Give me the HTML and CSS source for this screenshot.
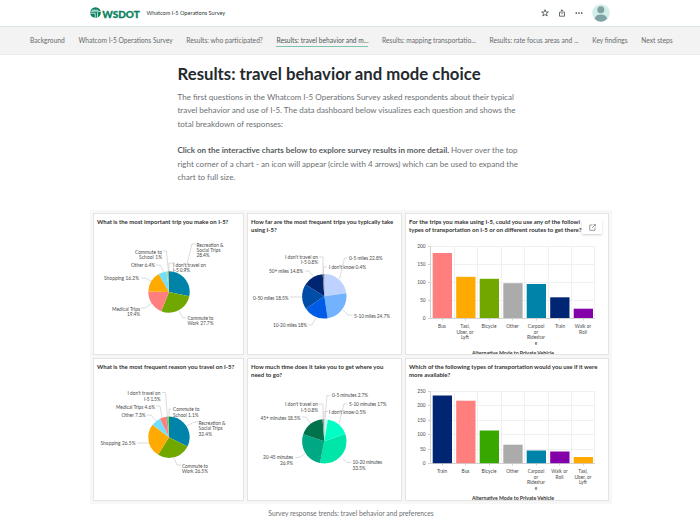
FILE: index.html
```
<!DOCTYPE html>
<html lang="en">
<head>
<meta charset="utf-8">
<title>Whatcom I-5 Operations Survey</title>
<link rel="stylesheet" href="styles.css">
</head>
<body>
<header class="topbar">
  <svg class="logo" width="50" height="14" viewBox="0 -1 50 14">
    <ellipse cx="5.5" cy="5.5" rx="5.4" ry="5.3" fill="#0b8261"/>
    <path d="M0 4.2h7.2c1.3 0 1.3-1 0-1H2M0 6.2h5.2v4.6M10.9 4.5H9.2c-1.2 0-1.7.7-1.7 1.7v4.4" fill="none" stroke="#fff" stroke-width=".75"/>
    <text x="12.2" y="10.9" textLength="37.5" lengthAdjust="spacingAndGlyphs">WSDOT</text>
  </svg>
  <span class="site-title">Whatcom I-5 Operations Survey</span>
  <div class="actions">
    <svg width="8" height="8" viewBox="0 0 8 8"><path d="M4 .7 4.9 3h2.500l-2 1.500.8 2.500L4 5.500 1.800 7l.8-2.500-2-1.500h2.500z"/></svg>
    <svg width="8" height="8" viewBox="0 0 8 8"><path d="M2.800 3.200H1.500v4h5v-4H5.200M4 5.400V.8M2.600 2.200 4 .8l1.400 1.400"/></svg>
    <svg width="8" height="8" viewBox="0 0 8 8"><g class="dots"><circle cx="1.300" cy="4" r=".85"/><circle cx="4" cy="4" r=".85"/><circle cx="6.700" cy="4" r=".85"/></g></svg>
  </div>
  <svg class="avatar" width="18" height="18" viewBox="0 0 18 18"><circle cx="9" cy="9" r="8.800" fill="#d3edeb"/><circle cx="8.800" cy="5.800" r="3.500" fill="#7fa3a3"/><path d="M2.600 14.800c.5-2.900 3-4.400 6.300-4.400s5.800 1.500 6.300 4.400A8.600 8.600 0 0 1 9 17.700a8.600 8.600 0 0 1-6.400-2.900z" fill="#7fa3a3"/></svg>
</header>
<nav class="nav">
  <a>Background</a>
  <a>Whatcom I-5 Operations Survey</a>
  <a>Results: who participated?</a>
  <a class="active">Results: travel behavior and m...</a>
  <a>Results: mapping transportatio...</a>
  <a>Results: rate focus areas and ...</a>
  <a>Key findings</a>
  <a>Next steps</a>
</nav>
<main>
  <section class="intro">
    <h1>Results: travel behavior and mode choice</h1>
    <p class="para">The first questions in the Whatcom I-5 Operations Survey asked respondents about their typical<br>travel behavior and use of I-5. The data dashboard below visualizes each question and shows the<br>total breakdown of responses:</p>
    <p class="para"><b>Click on the interactive charts below to explore survey results in more detail.</b> Hover over the top<br>right corner of a chart - an icon will appear (circle with 4 arrows) which can be used to expand the<br>chart to full size.</p>
  </section>
  <figure class="figure">
    <div class="dashboard">
      <article class="card">
        <h2>What is the most important trip you make on I-5?</h2>
        <svg width="149" height="118" viewBox="94 236 149 118">
          <g class="leader"><path d="M196 244h-4l-7 28M163 251h3.500l2 22M156 265h4l4 7M174 263h-5v10M141 278h4l8 4M141 308h4l7-5M186 318h-3l-4-7"/></g>
          <g class="pie" transform="translate(169 292) rotate(-90)">
            <circle r="10.350" stroke="#0083a8" pathLength="100" stroke-dasharray="28.4 100"/>
            <circle r="10.350" stroke="#70a800" pathLength="100" stroke-dasharray="27.7 100" stroke-dashoffset="-28.4"/>
            <circle r="10.350" stroke="#ff7f7f" pathLength="100" stroke-dasharray="19.4 100" stroke-dashoffset="-56.1"/>
            <circle r="10.350" stroke="#ffaa00" pathLength="100" stroke-dasharray="16.2 100" stroke-dashoffset="-75.5"/>
            <circle r="10.350" stroke="#73dfff" pathLength="100" stroke-dasharray="6.4 100" stroke-dashoffset="-91.7"/>
            <circle r="10.350" stroke="#a3e57a" pathLength="100" stroke-dasharray="1 100" stroke-dashoffset="-98.1"/>
            <circle r="10.350" stroke="#9c9c9c" pathLength="100" stroke-dasharray=".9 100" stroke-dashoffset="-99.1"/>
          </g>
          <g class="label">
            <text x="196.500" y="246.500" textLength="27">Recreation &amp;</text><text x="196.500" y="251.800" textLength="24">Social Trips</text><text x="196.500" y="257.100" textLength="13">28.4%</text>
            <text x="135" y="253.700" textLength="27">Commute to</text><text x="139" y="258.900" textLength="23">School 1%</text>
            <text x="131" y="267" textLength="24">Other 6.4%</text>
            <text x="173" y="266.500" textLength="33">I don't travel on</text><text x="173" y="271.700" textLength="17">I-5 0.9%</text>
            <text x="104" y="280" textLength="35">Shopping 16.2%</text>
            <text x="112" y="310.500" textLength="28">Medical Trips</text><text x="127" y="316" textLength="13">19.4%</text>
            <text x="187.500" y="320" textLength="26">Commute to</text><text x="187.500" y="325.300" textLength="26">Work 27.7%</text>
          </g>
        </svg>
      </article>
      <article class="card">
        <h2>How far are the most frequent trips you typically take<br>using I-5?</h2>
        <svg width="153" height="118" viewBox="248 236 153 118">
          <g class="leader"><path d="M347 258h-2.500l-5 21M319 257h4v17M327 267h-3.500v7M305 271h4l4 5M290 297h12M308 325h4l4-7M353 315h-5l-5-5"/></g>
          <g class="pie big" transform="translate(324.300 296.300) rotate(-90)">
            <circle r="11.100" stroke="#bed2ff" pathLength="100" stroke-dasharray="22.8 100"/>
            <circle r="11.100" stroke="#73b2ff" pathLength="100" stroke-dasharray="24.7 100" stroke-dashoffset="-22.8"/>
            <circle r="11.100" stroke="#005ce6" pathLength="100" stroke-dasharray="18 100" stroke-dashoffset="-47.5"/>
            <circle r="11.100" stroke="#004da8" pathLength="100" stroke-dasharray="18.5 100" stroke-dashoffset="-65.5"/>
            <circle r="11.100" stroke="#002673" pathLength="100" stroke-dasharray="14.8 100" stroke-dashoffset="-84"/>
            <circle r="11.100" stroke="#828282" pathLength="100" stroke-dasharray="1.2 100" stroke-dashoffset="-98.8"/>
          </g>
          <g class="label">
            <text x="285" y="258.700" textLength="33">I don't travel on</text><text x="301" y="264" textLength="17">I-5 0.8%</text>
            <text x="349" y="260" textLength="33.500">0-5 miles 22.8%</text>
            <text x="329" y="269" textLength="37">I don't know 0.4%</text>
            <text x="269" y="272.800" textLength="34">50+ miles 14.8%</text>
            <text x="253" y="299.500" textLength="35.500">0-50 miles 18.5%</text>
            <text x="273" y="327" textLength="34">10-20 miles 18%</text>
            <text x="354" y="317.500" textLength="36">5-10 miles 24.7%</text>
          </g>
        </svg>
      </article>
      <article class="card">
        <h2>For the trips you make using I-5, could you use any of the followi<br>types of transportation on I-5 or on different routes to get there?</h2>
        <svg width="202" height="118" viewBox="406 236 202 118">
          <path class="grid" d="M430.500 246.500H595M430.500 264.500H595M430.500 282.500H595M430.500 300.500H595M454.500 246v72M477.500 246v72M501.500 246v72M524.500 246v72M548.500 246v72M571.500 246v72M594.500 246v72"/>
          <path class="axis" d="M430.500 246v72.500H595M428 246.500h2M428 264.500h2M428 282.500h2M428 300.500h2M428 318.500h2M442.500 318v2.500M465.500 318v2.500M489.500 318v2.500M512.500 318v2.500M536.500 318v2.500M559.500 318v2.500M583.500 318v2.500"/>
          <rect x="432.700" y="253" width="19.300" height="65" fill="#ff7f7f"/>
          <rect x="456.200" y="276.800" width="19.300" height="41.200" fill="#ffaa00"/>
          <rect x="479.700" y="278.800" width="19.300" height="39.200" fill="#70a800"/>
          <rect x="503.300" y="283.200" width="19.300" height="34.800" fill="#ababab"/>
          <rect x="526.700" y="284" width="19.300" height="34" fill="#0083a8"/>
          <rect x="550.200" y="297.300" width="19.300" height="20.700" fill="#002673"/>
          <rect x="573.700" y="308.700" width="19.300" height="9.300" fill="#8400a8"/>
          <g class="label end"><text x="425.500" y="247.700">200</text><text x="425.500" y="265.700">150</text><text x="425.500" y="283.700">100</text><text x="425.500" y="301.900">50</text><text x="425.500" y="319.900">0</text></g>
          <g class="label mid"><text x="442" y="328">Bus</text><text x="465" y="328">Taxi,</text><text x="465" y="333.500">Uber, or</text><text x="465" y="339">Lyft</text><text x="489" y="328">Bicycle</text><text x="512.500" y="328">Other</text><text x="536" y="328">Carpool</text><text x="536" y="333.500">or</text><text x="536" y="339">Rideshar</text><text x="536" y="344.500">e</text><text x="560" y="328">Train</text><text x="583" y="328">Walk or</text><text x="583" y="333.500">Roll</text></g>
          <text class="axis-title" x="472" y="354.500" textLength="82" lengthAdjust="spacingAndGlyphs">Alternative Mode to Private Vehicle</text>
        </svg>
        <span class="expand"><svg width="7" height="7" viewBox="0 0 7 7"><path d="M3.500 1H.7v5.300H6V3.500M3 4l3.300-3.300M4.400.6h2v2"/></svg></span>
      </article>
      <article class="card">
        <h2>What is the most frequent reason you travel on I-5?</h2>
        <svg width="149" height="119" viewBox="94 381 149 119">
          <g class="leader"><path d="M162 392.500h3.500l2 26M156 406h4l2 11M147 415h4l5 6M171 409h-2v8M198 422h-4l-7 4M137 443h12M181 465h-4l-3-7"/></g>
          <g class="pie" transform="translate(169 437.300) rotate(-90)">
            <circle r="10.350" stroke="#0083a8" pathLength="100" stroke-dasharray="32.4 100"/>
            <circle r="10.350" stroke="#70a800" pathLength="100" stroke-dasharray="26.5 100" stroke-dashoffset="-32.4"/>
            <circle r="10.350" stroke="#ffaa00" pathLength="100" stroke-dasharray="26.5 100" stroke-dashoffset="-58.9"/>
            <circle r="10.350" stroke="#73dfff" pathLength="100" stroke-dasharray="7.4 100" stroke-dashoffset="-85.4"/>
            <circle r="10.350" stroke="#ff7f7f" pathLength="100" stroke-dasharray="4.6 100" stroke-dashoffset="-92.8"/>
            <circle r="10.350" stroke="#9c9c9c" pathLength="100" stroke-dasharray="1.5 100" stroke-dashoffset="-97.4"/>
            <circle r="10.350" stroke="#7edc1c" pathLength="100" stroke-dasharray="1.1 100" stroke-dashoffset="-98.9"/>
          </g>
          <g class="label">
            <text x="127.500" y="395" textLength="33">I don't travel on</text><text x="144" y="400.500" textLength="16.500">I-5 1.5%</text>
            <text x="116" y="409" textLength="39">Medical Trips 4.6%</text>
            <text x="121.500" y="417.300" textLength="24">Other 7.3%</text>
            <text x="173" y="411.300" textLength="26.500">Commute to</text><text x="173" y="416.600" textLength="25.500">School 1.1%</text>
            <text x="198.500" y="424.500" textLength="27">Recreation &amp;</text><text x="198.500" y="430" textLength="24">Social Trips</text><text x="198.500" y="435.500" textLength="13.500">32.4%</text>
            <text x="100.500" y="445.200" textLength="35">Shopping 26.5%</text>
            <text x="182" y="467.500" textLength="26">Commute to</text><text x="182" y="473" textLength="26">Work 26.5%</text>
          </g>
        </svg>
      </article>
      <article class="card">
        <h2>How much time does it take you to get where you<br>need to go?</h2>
        <svg width="153" height="119" viewBox="248 381 153 119">
          <g class="leader"><path d="M330 395.500h-3l-2 24M319 404h4v15M328 411.500h-4v8M347 404h-3l-5 19M302 417h4l5 7M295 457.500h4l6-4M351 462.500h-4l-4-4"/></g>
          <g class="pie big" transform="translate(324.300 441.300) rotate(-90)">
            <circle r="11.100" stroke="#beffe8" pathLength="100" stroke-dasharray="2.7 100"/>
            <circle r="11.100" stroke="#00ffc5" pathLength="100" stroke-dasharray="17 100" stroke-dashoffset="-2.7"/>
            <circle r="11.100" stroke="#00e6a9" pathLength="100" stroke-dasharray="33.5 100" stroke-dashoffset="-19.7"/>
            <circle r="11.100" stroke="#00a884" pathLength="100" stroke-dasharray="26.9 100" stroke-dashoffset="-53.2"/>
            <circle r="11.100" stroke="#00734c" pathLength="100" stroke-dasharray="18.6 100" stroke-dashoffset="-80.1"/>
            <circle r="11.100" stroke="#9c9c9c" pathLength="100" stroke-dasharray="1.3 100" stroke-dashoffset="-98.7"/>
          </g>
          <g class="label">
            <text x="332" y="397.300" textLength="36">0-5 minutes 2.7%</text>
            <text x="285" y="406.300" textLength="33">I don't travel on</text><text x="301" y="411.800" textLength="17">I-5 0.8%</text>
            <text x="349" y="405.600" textLength="37.500">5-10 minutes 17%</text>
            <text x="329" y="413.800" textLength="37">I don't know 0.5%</text>
            <text x="260.500" y="420.300" textLength="40">45+ minutes 18.5%</text>
            <text x="263" y="459" textLength="30">20-45 minutes</text><text x="280" y="464.600" textLength="13">26.9%</text>
            <text x="352.500" y="464" textLength="29.500">10-20 minutes</text><text x="352.500" y="469.500" textLength="13">33.5%</text>
          </g>
        </svg>
      </article>
      <article class="card">
        <h2>Which of the following types of transportation would you use if it were<br>more available?</h2>
        <svg width="202" height="119" viewBox="406 381 202 119">
          <path class="grid" d="M430.500 391.500H595M430.500 405.500H595M430.500 420.500H595M430.500 434.500H595M430.500 449.500H595M454.500 391v72M477.500 391v72M501.500 391v72M524.500 391v72M548.500 391v72M571.500 391v72M594.500 391v72"/>
          <path class="axis" d="M430.500 391v72.500H595M428 391.500h2M428 405.500h2M428 420.500h2M428 434.500h2M428 449.500h2M428 463.500h2M442.500 463v2.500M465.500 463v2.500M489.500 463v2.500M512.500 463v2.500M536.500 463v2.500M559.500 463v2.500M583.500 463v2.500"/>
          <rect x="432.700" y="395.500" width="19.300" height="67.700" fill="#002673"/>
          <rect x="456.200" y="400.700" width="19.300" height="62.500" fill="#ff7f7f"/>
          <rect x="479.700" y="430.500" width="19.300" height="32.700" fill="#38a800"/>
          <rect x="503.300" y="444.700" width="19.300" height="18.500" fill="#ababab"/>
          <rect x="526.700" y="450.500" width="19.300" height="12.700" fill="#0083a8"/>
          <rect x="550.200" y="451.500" width="19.300" height="11.700" fill="#8400a8"/>
          <rect x="573.700" y="457" width="19.300" height="6.200" fill="#ffaa00"/>
          <g class="label end"><text x="425.500" y="393.200">250</text><text x="425.500" y="407.300">200</text><text x="425.500" y="421.900">150</text><text x="425.500" y="436.200">100</text><text x="425.500" y="450.700">50</text><text x="425.500" y="465.200">0</text></g>
          <g class="label mid"><text x="442" y="473">Train</text><text x="465.500" y="473">Bus</text><text x="489" y="473">Bicycle</text><text x="512.500" y="473">Other</text><text x="536" y="473">Carpool</text><text x="536" y="478.500">or</text><text x="536" y="484">Rideshar</text><text x="536" y="489.500">e</text><text x="559.500" y="473">Walk or</text><text x="559.500" y="478.500">Roll</text><text x="583" y="473">Taxi,</text><text x="583" y="478.500">Uber, or</text><text x="583" y="484">Lyft</text></g>
          <text class="axis-title" x="472" y="500.300" textLength="82" lengthAdjust="spacingAndGlyphs">Alternative Mode to Private Vehicle</text>
        </svg>
      </article>
    </div>
    <figcaption>Survey response trends: travel behavior and preferences</figcaption>
  </figure>
</main>
</body>
</html>
```

FILE: styles.css
```
* { box-sizing: border-box; }
body { margin: 0; height: 520px; overflow: hidden; background: #fff; font-family: Lato, "Liberation Sans", sans-serif; }
svg { display: block; }
.topbar { height: 27px; display: flex; align-items: center; padding-left: 90px; border-bottom: 1px solid #d9e5e1; }
.logo { overflow: visible; }
.logo text { font: 900 10px Lato, sans-serif; fill: #0b8261; stroke: #0b8261; stroke-width: .3; }
.site-title { margin-left: 6.500px; font-size: 5.550px; color: #2b3a38; width: 79px; white-space: nowrap; }
.actions { display: flex; gap: 8.800px; margin-left: 315.500px; }
.actions path { fill: none; stroke: #34403f; stroke-width: .75; }
.dots { fill: #34403f; }
.avatar { margin-left: 9px; }
.nav { height: 28px; padding: 1px 0 0 30px; background: #f3f3f3; border-bottom: 1px solid #ececec; display: flex; align-items: center; gap: 13.600px; }
.nav a { font-size: 6.660px; line-height: 10px; padding-bottom: 1px; border-bottom: 1px solid transparent; color: #666b6b; white-space: nowrap; }
.nav .active { border-color: #7fc4ae; color: #505858; }
.intro { padding: 8px 0 0 177.500px; height: 155px; white-space: nowrap; }
h1 { margin: 0; font-size: 16.740px; line-height: 22px; font-weight: 700; color: #24292e; }
.para { margin: 6px 0 13.500px; font-size: 8.030px; line-height: 13.300px; color: #6b7073; }
.para b { color: #565b60; }
.figure { margin: 0 0 0 90px; width: 522px; }
.dashboard { background: #f7f7f7; height: 294px; padding: 3px; display: grid; grid-template-columns: 151px 155px 204px; grid-template-rows: 142px 143px; gap: 3px; }
.card { position: relative; background: #fff; border: 1px solid #e4e4e4; overflow: hidden; }
.card h2 { margin: 0; height: 22px; padding: 3.500px 0 0 3px; font-size: 6px; line-height: 8.500px; font-weight: 700; color: #333; white-space: nowrap; }
.pie circle { fill: none; stroke-width: 20.700px; }
.pie.big circle { stroke-width: 22.200px; }
.leader path { fill: none; stroke: #c4c4c4; stroke-width: .6; }
.label text { font-size: 4.800px; fill: #4a4a4a; }
.end text { text-anchor: end; }
.mid text { text-anchor: middle; }
.grid { stroke: #f0f0f0; fill: none; }
.axis { stroke: #d2d2d2; fill: none; }
.axis-title { font-size: 5px; font-weight: 700; fill: #333; }
.expand { position: absolute; right: 6px; top: 6px; width: 20px; height: 14px; background: #fff; box-shadow: 0 1px 2px #0003; display: flex; align-items: center; justify-content: center; }
.expand path { fill: none; stroke: #777; stroke-width: .7; }
figcaption { margin-top: 4px; text-align: center; font-size: 6.750px; line-height: 10px; color: #6b7073; }
```
